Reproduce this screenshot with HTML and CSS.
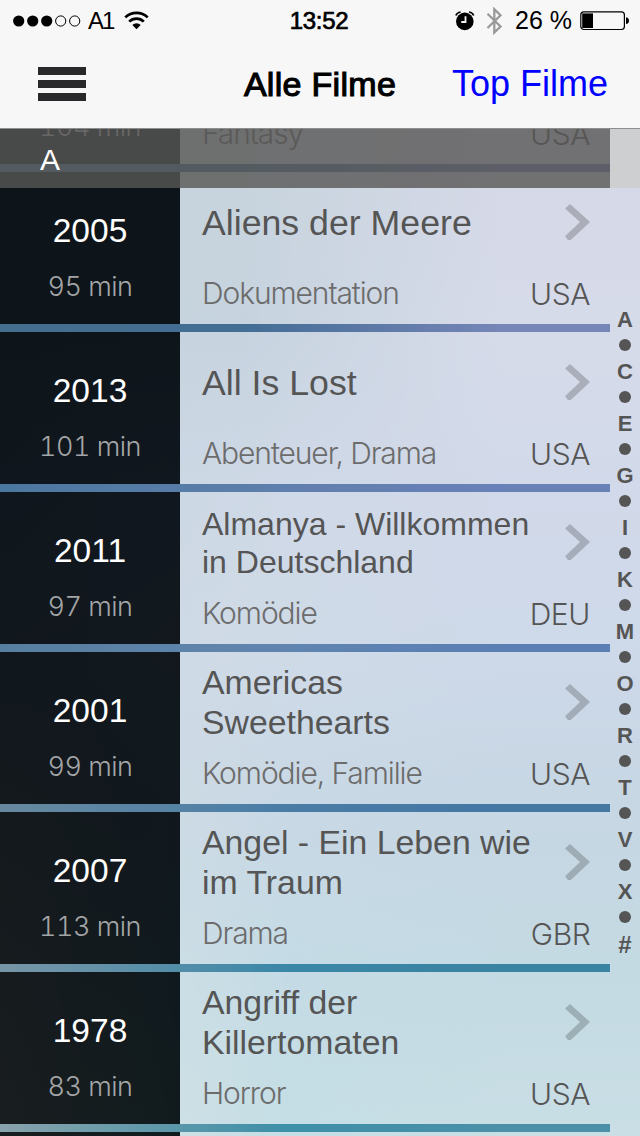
FILE: index.html
```html
<!DOCTYPE html>
<html lang="de">
<head>
  <meta charset="utf-8">
  <title>Alle Filme</title>
  <meta name="viewport" content="width=device-width, initial-scale=1.0">
  <link rel="stylesheet" href="styles.css">
</head>
<body>
  <!-- chevron shared by all rows -->
  <svg class="defs" width="0" height="0">
    <symbol id="chevron" viewBox="0 0 26 36">
      <path d="M6 0L26 18L6.8 36H4L1 32.2L16 18L1 4.6Z"/>
    </symbol>
  </svg>

  <header class="top">
    <!-- status bar -->
    <div class="status">
      <div class="status-left">
        <svg width="68" height="12" viewBox="0 0 68 12">
          <circle cx="5.7" cy="6" r="5.6"/>
          <circle cx="19.7" cy="6" r="5.6"/>
          <circle cx="33.7" cy="6" r="5.6"/>
          <circle class="ring" cx="47.7" cy="6" r="5.1"/>
          <circle class="ring" cx="61.7" cy="6" r="5.1"/>
        </svg>
        <span class="carrier">A1</span>
        <svg class="wifi" width="25" height="19" viewBox="0 0 25 19">
          <path class="arc" d="M1.3 6.4A16 16 0 0 1 23.7 6.4"/>
          <path class="arc" d="M5.2 10.6A10.4 10.4 0 0 1 19.8 10.6"/>
          <path d="M12.5 18.2L8.3 13.9A6 6 0 0 1 16.7 13.9Z"/>
        </svg>
      </div>
      <span class="clock">13:52</span>
      <div class="status-right">
        <svg class="alarm" width="20" height="20" viewBox="0 0 20 20">
          <circle cx="9.8" cy="10.4" r="8.8"/>
          <path class="bell" d="M.9 4.6Q1.8 1.6 5.6 1M18.7 4.6Q17.8 1.6 14 1"/>
          <path class="hand" d="M10.5 5.2V11H6.3"/>
        </svg>
        <svg class="bluetooth" width="17" height="28" viewBox="0 0 17 28">
          <path d="M1.5 6.8L14.5 19.5L8.3 25.5V2.2L14.5 8.3L1.5 21"/>
        </svg>
        <span class="percent">26 %</span>
        <svg class="battery" width="49" height="20" viewBox="0 0 49 20">
          <rect class="case" x=".8" y=".9" width="43.6" height="17.6" rx="3"/>
          <rect x="2.2" y="2.4" width="10.8" height="14.6"/>
          <path d="M46 6.3Q49 7 49 9.7T46 13.1Z"/>
        </svg>
      </div>
    </div>

    <!-- navigation bar -->
    <nav class="nav">
      <div class="menu"><i></i><i></i><i></i></div>
      <h1>Alle Filme</h1>
      <a class="top-link">Top Filme</a>
    </nav>
  </header>

  <main class="content">
    <div class="list">
      <article class="row">
        <div class="when"><b></b><span class="min">104 min</span></div>
        <div class="film">
          <span class="genre">Fantasy</span><span class="country">USA</span>
        </div>
      </article>
      <article class="row">
        <div class="when"><b>2005</b><span class="min">95 min</span></div>
        <div class="film">
          <h2>Aliens der Meere</h2>
          <svg class="chevron"><use href="#chevron"/></svg>
          <span class="genre">Dokumentation</span><span class="country">USA</span>
        </div>
      </article>
      <article class="row">
        <div class="when"><b>2013</b><span class="min">101 min</span></div>
        <div class="film">
          <h2>All Is Lost</h2>
          <svg class="chevron"><use href="#chevron"/></svg>
          <span class="genre">Abenteuer, Drama</span><span class="country">USA</span>
        </div>
      </article>
      <article class="row">
        <div class="when"><b>2011</b><span class="min">97 min</span></div>
        <div class="film">
          <h2 class="small">Almanya - Willkommen<br>in Deutschland</h2>
          <svg class="chevron"><use href="#chevron"/></svg>
          <span class="genre">Komödie</span><span class="country">DEU</span>
        </div>
      </article>
      <article class="row">
        <div class="when"><b>2001</b><span class="min">99 min</span></div>
        <div class="film">
          <h2 class="medium">Americas<br>Sweethearts</h2>
          <svg class="chevron"><use href="#chevron"/></svg>
          <span class="genre">Komödie, Familie</span><span class="country">USA</span>
        </div>
      </article>
      <article class="row">
        <div class="when"><b>2007</b><span class="min">113 min</span></div>
        <div class="film">
          <h2 class="medium">Angel - Ein Leben wie<br>im Traum</h2>
          <svg class="chevron"><use href="#chevron"/></svg>
          <span class="genre">Drama</span><span class="country">GBR</span>
        </div>
      </article>
      <article class="row">
        <div class="when"><b>1978</b><span class="min">83 min</span></div>
        <div class="film">
          <h2 class="medium">Angriff der<br>Killertomaten</h2>
          <svg class="chevron"><use href="#chevron"/></svg>
          <span class="genre">Horror</span><span class="country">USA</span>
        </div>
      </article>
      <article class="row">
        <div class="when"></div>
        <div class="film"></div>
      </article>
    </div>

    <!-- sticky section title -->
    <div class="section-title">A</div>

    <!-- alphabet index -->
    <aside class="index">
      <span>A</span><i></i><span>C</span><i></i><span>E</span><i></i><span>G</span><i></i>
      <span>I</span><i></i><span>K</span><i></i><span>M</span><i></i><span>O</span><i></i>
      <span>R</span><i></i><span>T</span><i></i><span>V</span><i></i><span>X</span><i></i>
      <span class="other">#</span>
    </aside>
  </main>
</body>
</html>
```
FILE: styles.css
```css
* {
  margin: 0;
  padding: 0;
  box-sizing: border-box;
}
body {
  width: 640px;
  height: 1136px;
  overflow: hidden;
  display: flex;
  flex-direction: column;
  font-family: "Liberation Sans", Arial, sans-serif;
  color: #000;
}
.defs {
  position: absolute;
}

/* top bars */
.top {
  height: 128px;
  flex: none;
  background: #f7f7f7;
  box-shadow: 0 1px 0 #8e8e8f;
  position: relative;
  z-index: 2;
}
.status {
  height: 40px;
  display: grid;
  grid-template-columns: 1fr auto 1fr;
  align-items: center;
  padding: 1px 11px 0 13px;
  font-size: 24px;
}
.status-left,
.status-right {
  display: flex;
  align-items: center;
}
.status-right {
  justify-content: flex-end;
}
.ring {
  fill: none;
  stroke: #000;
  stroke-width: 1;
}
.carrier {
  margin-left: 7px;
  letter-spacing: -2px;
}
.wifi {
  margin-left: 11px;
}
.arc {
  fill: none;
  stroke: #000;
  stroke-width: 2.7;
}
.clock {
  margin-right: 4px;
  letter-spacing: -0.3px;
  -webkit-text-stroke: 0.7px #000;
}
.bell {
  fill: none;
  stroke: #000;
  stroke-width: 1.6;
}
.hand {
  fill: none;
  stroke: #f7f7f7;
  stroke-width: 1.8;
}
.bluetooth {
  margin-left: 11px;
  fill: none;
  stroke: #999;
  stroke-width: 2.3;
}
.percent {
  margin: 0 8px 0 12px;
  font-size: 25px;
}
.case {
  fill: none;
  stroke: #000;
  stroke-width: 1.2;
}
.nav {
  height: 88px;
  display: grid;
  grid-template-columns: 1fr auto 1fr;
  align-items: center;
  padding: 0 32px 0 38px;
}
.menu {
  width: 48px;
  display: flex;
  flex-direction: column;
  gap: 5px;
}
.menu i {
  height: 8px;
  background: #29292b;
}
.nav h1 {
  margin-right: 6px;
  font-size: 34px;
  font-weight: normal;
  letter-spacing: 0.3px;
  -webkit-text-stroke: 1.1px #000;
}
.top-link {
  justify-self: end;
  font-size: 36px;
  color: #00f;
}

/* blurred backdrop: three vertical blends faded into each other */
.content {
  flex: 1;
  position: relative;
  overflow: hidden;
  isolation: isolate;
  background: linear-gradient(#47718c, #44708f 200px, #4b78a1 360px, #567fa0 520px, #6789a0 680px, #7896a8 840px, #89a4ad 1008px);
}
.content::before,
.content::after {
  content: "";
  position: absolute;
  inset: 0;
  z-index: -1;
}
.content::before {
  background: linear-gradient(#44708c, #426d95 200px, #5f7fac 360px, #6286b0 520px, #4a7ea8 680px, #3b88a9 840px, #3c90a8 1008px);
  -webkit-mask-image: linear-gradient(to right, transparent, #000 290px);
  mask-image: linear-gradient(to right, transparent, #000 290px);
}
.content::after {
  background: linear-gradient(#747cab, #7686b6 200px, #6881b7 360px, #5a7fb4 520px, #4478a3 680px, #3a83a2 840px, #4b91a8 1008px);
  -webkit-mask-image: linear-gradient(to right, transparent 240px, #000 500px);
  mask-image: linear-gradient(to right, transparent 240px, #000 500px);
}

/* film rows, scrolled a bit under the bar */
.list {
  width: 610px;
  margin-top: -116px;
  display: flex;
  flex-direction: column;
  gap: 8px;
}
.row {
  height: 152px;
  flex: none;
  display: flex;
}
.when {
  width: 180px;
  flex: none;
  padding-top: 39px;
  display: flex;
  flex-direction: column;
  align-items: center;
  gap: 18px;
  background: rgba(3, 3, 3, 0.84);
}
.when b {
  height: 40px;
  font-size: 33.5px;
  font-weight: normal;
  line-height: 40px;
  color: #fff;
}
.min {
  font-family: Inter, "Liberation Sans", sans-serif;
  font-size: 27px;
  font-weight: 300;
  font-variant-numeric: tabular-nums;
  letter-spacing: -0.5px;
  line-height: 36px;
  color: #a3a5a7;
}
.film {
  flex: 1;
  padding: 0 20px 0 22px;
  display: grid;
  grid-template-columns: 1fr auto;
  grid-template-rows: 102px 50px;
  background: rgba(255, 255, 255, 0.7);
}
.film h2 {
  align-self: center;
  font-size: 35.7px;
  font-weight: normal;
  line-height: 40px;
  white-space: nowrap;
  color: #555;
}
.film h2.medium {
  padding-bottom: 2px;
  font-size: 33.8px;
}
.film h2.small {
  font-size: 32px;
  line-height: 38px;
}
.chevron {
  width: 26px;
  height: 36px;
  margin-top: 32px;
  justify-self: end;
  fill: rgba(0, 0, 0, 0.2);
}
.genre,
.country {
  grid-row: 2;
  font-family: Inter, "Liberation Sans", sans-serif;
  font-size: 30px;
  font-weight: 300;
  letter-spacing: -1.1px;
  line-height: 38px;
  color: #6c6c6c;
}
.country {
  padding-top: 1px;
  letter-spacing: -0.4px;
  color: #555;
}

.section-title {
  position: absolute;
  top: 0;
  left: 0;
  width: 100%;
  height: 60px;
  padding: 14px 40px;
  font-size: 30px;
  line-height: 36px;
  color: #fff;
  background: rgba(87, 86, 85, 0.8);
}

/* alphabet index on the right edge */
.index {
  position: absolute;
  top: 0;
  right: 0;
  width: 30px;
  height: 100%;
  padding-top: 178px;
  display: flex;
  flex-direction: column;
  align-items: center;
  font-size: 22px;
  font-weight: bold;
  color: #555;
  background: rgba(255, 255, 255, 0.7);
}
.index span {
  height: 26px;
  line-height: 27px;
}
.index .other {
  font-size: 24px;
  line-height: 29px;
}
.index i {
  width: 12px;
  height: 12px;
  margin: 7px 0;
  border-radius: 50%;
  background: #555;
}
```
